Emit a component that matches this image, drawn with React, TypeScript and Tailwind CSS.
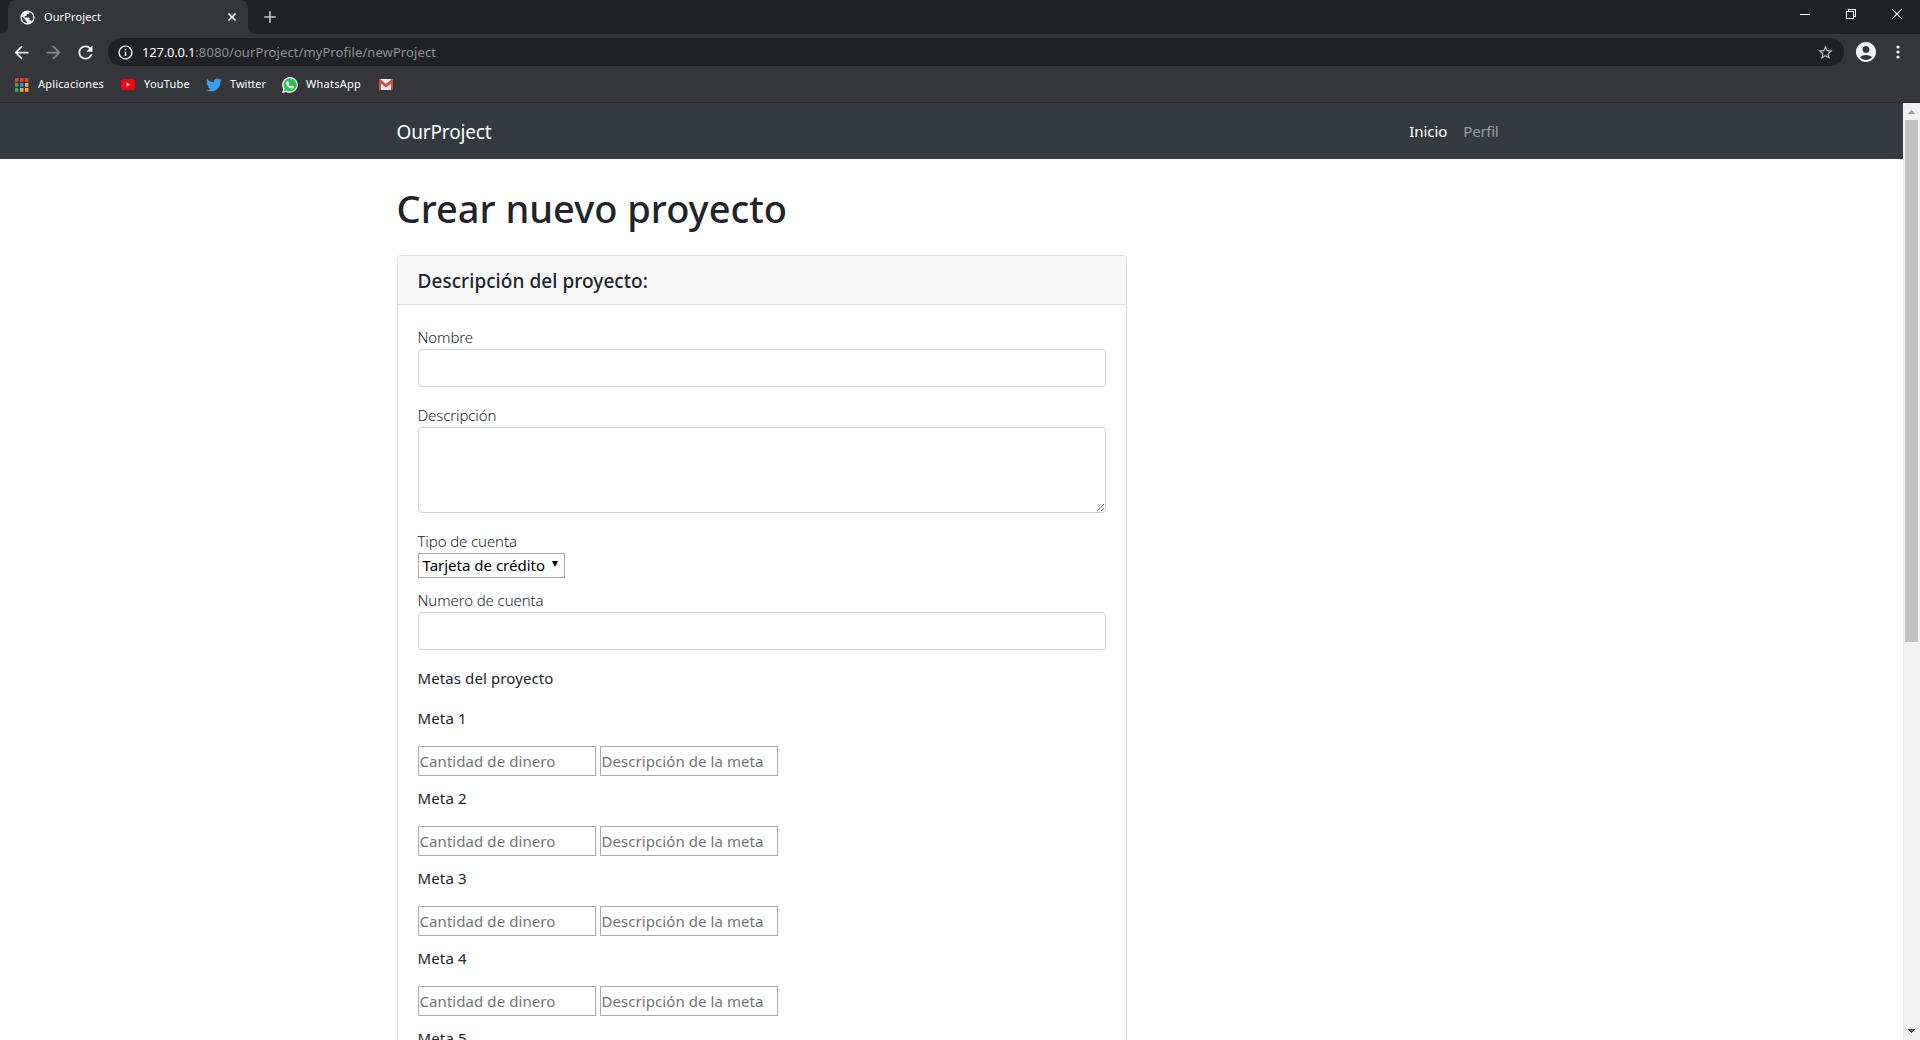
import type { ReactNode } from "react";
import {
  MdAccountCircle,
  MdAdd,
  MdArrowBack,
  MdArrowForward,
  MdOutlineInfo,
  MdPublic,
  MdRefresh,
  MdStarBorder,
} from "react-icons/md";
import { FaTwitter } from "react-icons/fa";

function WindowControls() {
  return (
    <div className="ml-auto flex h-[28px] items-center text-white">
      <div className="flex w-[46px] justify-center">
        <svg width="10" height="10" shapeRendering="crispEdges">
          <rect y="5" width="10" height="1" fill="currentColor" />
        </svg>
      </div>
      <div className="flex w-[46px] justify-center">
        <svg width="10" height="10" fill="none" stroke="currentColor" shapeRendering="crispEdges">
          <path d="M.5 2.5h7v7h-7zM2.5 2V.5h7v7H8" />
        </svg>
      </div>
      <div className="flex w-[46px] justify-center">
        <svg width="10" height="10" fill="none" stroke="currentColor" strokeWidth="1.2">
          <path d="M.2.2l9.6 9.6M9.8.2L.2 9.8" />
        </svg>
      </div>
    </div>
  );
}

function TabStrip() {
  return (
    <div className="flex h-[34px] bg-[#202124]">
      <svg width="8" height="34">
        <path d="M0 34h8v-8a8 8 0 0 1-8 8z" fill="#35363a" />
      </svg>
      <div className="flex h-[34px] w-[240px] items-center rounded-t-lg bg-[#35363a] pl-[11px] pr-[12px] text-white">
        <MdPublic size={17} className="text-[#f1f3f4]" />
        <span className="ml-[8px] text-[11px] tracking-[0.11px]">OurProject</span>
        <svg width="8" height="8" className="ml-auto" stroke="#f1f3f4" strokeWidth="1.7">
          <path d="M.5.5l7 7M7.5.5l-7 7" />
        </svg>
      </div>
      <svg width="8" height="34">
        <path d="M8 34H0v-8a8 8 0 0 0 8 8z" fill="#35363a" />
      </svg>
      <MdAdd size={20} className="ml-[4px] mt-[7px] text-[#c4c5c7]" />
      <WindowControls />
    </div>
  );
}

function AddressBar() {
  return (
    <div className="flex h-[36px] items-center text-[#f1f3f4]">
      <MdArrowBack size={21} className="ml-[11px]" />
      <MdArrowForward size={21} className="ml-[11px] text-[#86878a]" />
      <MdRefresh size={21} className="ml-[11px]" />
      <div className="ml-[12px] flex h-[28px] w-[1736px] items-center rounded-full bg-[#202124] pl-[9px] pr-[10px]">
        <MdOutlineInfo size={17} />
        <span className="ml-[8px] whitespace-pre pt-[1px] text-[13px]">
          <span className="tracking-[-0.2px] text-white">127.0.0.1</span>
          <span className="tracking-[0.09px] text-[#8e9194]">:8080/ourProject/myProfile/newProject</span>
        </span>
        <MdStarBorder size={17} className="ml-auto text-[#c4c7ca]" />
      </div>
      <MdAccountCircle size={24} className="ml-[10px]" />
      <svg width="4" height="14" className="ml-[18px]" fill="currentColor">
        <circle cx="2" cy="2" r="1.6" />
        <circle cx="2" cy="7" r="1.6" />
        <circle cx="2" cy="12" r="1.6" />
      </svg>
    </div>
  );
}

const appColors = [
  ["#ea4335", "#ea4335", "#ea4335"],
  ["#34a853", "#4285f4", "#f9ab2d"],
  ["#34a853", "#f9ab2d", "#f9ab2d"],
];

function AppsIcon() {
  return (
    <svg width="14" height="14">
      {appColors.map((row, y) =>
        row.map((c, x) => <rect key={`${x}-${y}`} x={x * 5} y={y * 5} width="3.4" height="3.8" fill={c} />)
      )}
    </svg>
  );
}

function YouTubeIcon() {
  return (
    <svg width="14" height="11" viewBox="0 0 14 11">
      <rect width="14" height="11" rx="2.4" fill="#ff0010" />
      <path d="M5.5 3.4v4.2L9.2 5.5z" fill="#fff" />
    </svg>
  );
}

function WhatsAppIcon() {
  return (
    <svg width="16" height="16" viewBox="0 0 16 16">
      <path d="M8.1 0A7.9 7.9 0 0 0 1.3 11.9L0 16l4.3-1.1A7.9 7.9 0 1 0 8.1 0z" fill="#fff" />
      <path d="M8.1 1.3a6.6 6.6 0 0 0-5.5 10.2l-.8 2.7 2.8-.7A6.6 6.6 0 1 0 8.1 1.3z" fill="#25c24c" />
      <path
        d="M5.5 4.2h.8l.9 2-.7 1c.6 1.1 1.4 1.9 2.6 2.4l.9-1 1.9.9c.1 1.3-.8 2.1-2 2.1-3 0-6-3.3-6-5.5 0-.9.8-1.7 1.6-1.9z"
        fill="#fff"
      />
    </svg>
  );
}

function GmailIcon() {
  return (
    <svg width="14" height="11" viewBox="0 0 14 11">
      <rect width="14" height="11" rx="1" fill="#eceff1" />
      <path d="M0 11V1l7 5.6L14 1v10h-2V4.6L7 8.4 2 4.6V11z" fill="#d54b3d" />
      <path d="M1 0h12L7 4.9z" fill="#f5f5f5" />
      <path d="M0 1Q0 0 1.2.1L7 4.9 12.8.1Q14 0 14 1v1.3L7 7.6 0 2.3z" fill="#d54b3d" />
    </svg>
  );
}

function Bookmark({ icon, label }: { icon: ReactNode; label?: ReactNode }) {
  return (
    <div className="flex items-center gap-[8px]">
      {icon}
      {label}
    </div>
  );
}

function BookmarksBar() {
  return (
    <div className="flex h-[33px] items-center border-b border-[#28292b] pb-[4px] pl-[15px] pt-[1px] text-[11px] text-white">
      <div className="flex w-[106px] items-center gap-[9px]">
        <AppsIcon />
        <span className="tracking-[0.17px]">Aplicaciones</span>
      </div>
      <div className="w-[85px]">
        <Bookmark icon={<YouTubeIcon />} label={<span className="ml-px tracking-[0.2px]">YouTube</span>} />
      </div>
      <div className="w-[76px]">
        <Bookmark icon={<FaTwitter size={16} color="#3b9cf0" />} label={<span>Twitter</span>} />
      </div>
      <div className="w-[97px]">
        <Bookmark icon={<WhatsAppIcon />} label={<span className="tracking-[0.25px]">WhatsApp</span>} />
      </div>
      <GmailIcon />
    </div>
  );
}

function Navbar() {
  return (
    <nav className="flex h-[56px] bg-[#343a40]">
      <div className="mx-auto flex w-[1140px] items-center px-[15px]">
        <span className="pt-[2px] text-[19px] leading-[30px] tracking-[-0.15px] text-white">OurProject</span>
        <div className="ml-auto flex gap-[16px] pr-[8px] text-[15px] leading-6">
          <span className="tracking-[-0.05px] text-white">Inicio</span>
          <span className="tracking-[-0.25px] text-white/50">Perfil</span>
        </div>
      </div>
    </nav>
  );
}

function Label({ children }: { children: ReactNode }) {
  return <label className="block text-[15px] font-light leading-6 tracking-[-0.1px]">{children}</label>;
}

const fieldClass = "block w-full rounded border border-[#ced4da] bg-white px-3 outline-none";

function Goal({ n }: { n: number }) {
  const inputClass =
    "h-[30px] w-[178px] border border-[#a9a9a9] bg-white px-px text-[15px] tracking-[0.07px] outline-none placeholder:text-[#757575]";
  return (
    <div className="pb-[10px]">
      <p className="mb-4 leading-6 tracking-[0.15px]">Meta {n}</p>
      <div className="flex gap-[4px]">
        <input className={inputClass} placeholder="Cantidad de dinero" />
        <input className={inputClass} placeholder="Descripción de la meta" />
      </div>
    </div>
  );
}

function ProjectCard() {
  return (
    <section className="w-[730px] rounded border border-[#dfdfdf] bg-white">
      <h5 className="rounded-t-[3px] border-b border-[#dfdfdf] bg-[#f7f7f7] px-5 pb-[11px] pt-[13px] text-[19px] font-medium leading-6 tracking-[0.06px]">
        Descripción del proyecto:
      </h5>
      <form className="p-5">
        <Label>Nombre</Label>
        <input className={`${fieldClass} mb-4 h-[38px]`} />
        <Label>Descripción</Label>
        <textarea className={`${fieldClass} mb-4 h-[86px]`} />
        <Label>Tipo de cuenta</Label>
        <div className="mb-[10px] flex h-[25px] w-[147px] items-center border border-[#a9a9a9] pl-[4px] pr-[6px] text-black">
          <span className="whitespace-nowrap">Tarjeta de crédito</span>
          <svg width="6" height="6" viewBox="0 0 6 6" className="-mt-[4px] ml-auto">
            <path d="M0 0h6L3 6z" fill="currentColor" />
          </svg>
        </div>
        <Label>Numero de cuenta</Label>
        <input className={`${fieldClass} mb-4 h-[38px]`} />
        <p className="mb-4 leading-6 tracking-[0.1px]">Metas del proyecto</p>
        {[1, 2, 3, 4, 5].map((n) => (
          <Goal key={n} n={n} />
        ))}
      </form>
    </section>
  );
}

function Scrollbar() {
  return (
    <div className="flex w-[17px] flex-col items-center bg-[#f1f1f1]">
      <svg width="17" height="17" shapeRendering="crispEdges">
        <path d="M5 11h7v-1h-1V9h-1V8H9V7H8v1H7v1H6v1H5z" fill="#a3a3a3" />
      </svg>
      <div className="h-[522px] w-[13px] bg-[#c1c1c1]" />
      <svg width="17" height="17" className="mt-auto" shapeRendering="crispEdges">
        <path d="M5 6h7v1h-1v1h-1v1H9v1H8V9H7V8H6V7H5z" fill="#505050" />
      </svg>
    </div>
  );
}

export default function App() {
  return (
    <div className="flex h-[1040px] w-[1920px] flex-col overflow-hidden bg-white font-['Noto_Sans','Open_Sans',sans-serif]">
      <header className="bg-[#35363a]">
        <TabStrip />
        <AddressBar />
        <BookmarksBar />
      </header>
      <div className="flex min-h-0 flex-1">
        <div className="flex-1 overflow-hidden text-[15px] text-[#212529]">
          <Navbar />
          <main className="mx-auto w-[1140px] px-[15px] pt-6">
            <h1 className="mb-[22px] text-[38px] font-medium leading-[50px]">Crear nuevo proyecto</h1>
            <ProjectCard />
          </main>
        </div>
        <Scrollbar />
      </div>
    </div>
  );
}
